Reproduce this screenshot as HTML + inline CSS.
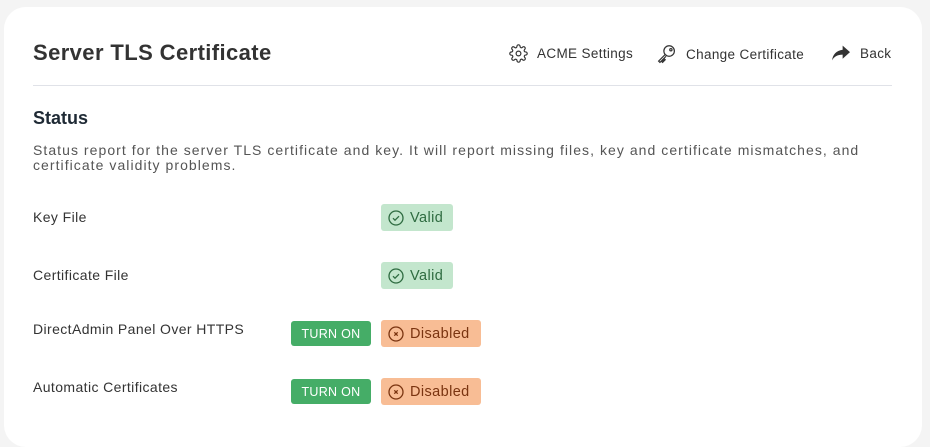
<!DOCTYPE html>
<html><head><style>
body{margin:0;background:#f4f4f4;width:930px;height:430px;overflow:hidden;font-family:"Liberation Sans",sans-serif;color:#333}
.card{position:absolute;left:4px;top:7px;width:918px;height:440px;background:#fff;border-radius:22px}
.abs{position:absolute;white-space:nowrap}
.title{left:29px;top:33px;font-size:22px;font-weight:bold;color:#333;letter-spacing:0.4px}
.nav{top:37px;font-size:13.5px;color:#333;display:flex;align-items:center;gap:9px;letter-spacing:0.35px}
.hr{left:29px;top:78px;width:859px;height:1px;background:#e0e2e8}
.h2{left:29px;top:101px;font-size:18px;font-weight:bold;color:#1f2a35}
.desc{left:29px;top:136px;font-size:14px;line-height:15px;color:#555;letter-spacing:1.05px}
.lbl{left:29px;font-size:14px;color:#333;letter-spacing:0.4px}
.badge{height:27px;border-radius:3px;display:flex;align-items:center;gap:6px;padding:0 7px;font-size:14.5px;letter-spacing:0.4px;box-sizing:border-box}
.ok{background:#c3e6cd;color:#2e6b40}
.no{background:#f8bd95;color:#7a3410}
.btn{left:287px;width:80px;height:25px;background:#45ad67;color:#fff;border-radius:3px;font-size:12.5px;display:flex;align-items:center;justify-content:center;letter-spacing:0.3px}
</style></head><body>
<div class="card">
<div class="abs title">Server TLS Certificate</div>
<div class="abs nav" style="left:505px"><svg width="19" height="19" viewBox="0 0 24 24" fill="none" stroke="#333" stroke-width="1.5"><circle cx="12" cy="12" r="3"/><path d="M19.4 15a1.7 1.7 0 0 0 .3 1.8l.1.1a2 2 0 1 1-2.8 2.8l-.1-.1a1.7 1.7 0 0 0-1.8-.3 1.7 1.7 0 0 0-1 1.5V21a2 2 0 1 1-4 0v-.1a1.7 1.7 0 0 0-1.1-1.5 1.7 1.7 0 0 0-1.800.3l-.1.1a2 2 0 1 1-2.8-2.8l.1-.1a1.7 1.7 0 0 0 .3-1.8 1.7 1.7 0 0 0-1.5-1H3a2 2 0 1 1 0-4h.1a1.7 1.7 0 0 0 1.5-1.1 1.7 1.7 0 0 0-.3-1.8l-.1-.1a2 2 0 1 1 2.8-2.8l.1.1a1.7 1.7 0 0 0 1.8.3H9a1.7 1.7 0 0 0 1-1.5V3a2 2 0 1 1 4 0v.1a1.7 1.7 0 0 0 1 1.5 1.7 1.7 0 0 0 1.8-.3l.1-.1a2 2 0 1 1 2.8 2.8l-.1.1a1.7 1.7 0 0 0-.3 1.8V9a1.7 1.7 0 0 0 1.5 1H21a2 2 0 1 1 0 4h-.1a1.7 1.7 0 0 0-1.5 1z"/></svg>ACME Settings</div>
<div class="abs nav" style="left:652px"><svg width="21" height="21" viewBox="0 0 24 24" fill="none" stroke="#333" stroke-width="1.4"><circle cx="15" cy="8" r="6"/><circle cx="17" cy="6.5" r="1.3"/><path d="M10.5 12 3 19.5 4.5 21l1.5-1.5 1.5 1.5 1-1-1.5-1.5 1-1 1.5 1.5 1-1-1.5-1.5 2.5-2.5"/></svg>Change Certificate</div>
<div class="abs nav" style="left:827px"><svg width="20" height="18" viewBox="0 0 24 22"><path d="M14 2l9 8-9 8v-5C8 13 4 15 1 20c1-7 5-12 13-13z" fill="#333"/></svg>Back</div>
<div class="abs hr"></div>
<div class="abs h2">Status</div>
<div class="abs desc">Status report for the server TLS certificate and key. It will report missing files, key and certificate mismatches, and<br>certificate validity problems.</div>
<div class="abs lbl" style="top:202px">Key File</div>
<div class="abs lbl" style="top:260px">Certificate File</div>
<div class="abs lbl" style="top:314px">DirectAdmin Panel Over HTTPS</div>
<div class="abs lbl" style="top:372px">Automatic Certificates</div>
<div class="abs badge ok" style="left:377px;top:197px;width:72px"><svg width="16" height="16" viewBox="0 0 16 16" fill="none" stroke="#2e6b40" stroke-width="1.3"><circle cx="8" cy="8" r="7"/><path d="M5 8.2l2 2 4-4"/></svg>Valid</div>
<div class="abs badge ok" style="left:377px;top:255px;width:72px"><svg width="16" height="16" viewBox="0 0 16 16" fill="none" stroke="#2e6b40" stroke-width="1.3"><circle cx="8" cy="8" r="7"/><path d="M5 8.2l2 2 4-4"/></svg>Valid</div>
<div class="abs btn" style="top:314px">TURN ON</div>
<div class="abs badge no" style="left:377px;top:313px;width:100px"><svg width="16" height="16" viewBox="0 0 16 16" fill="none" stroke="#7a3410" stroke-width="1.3"><circle cx="8" cy="8" r="7"/><path d="M6.3 6.3l3.4 3.4M9.7 6.3l-3.4 3.4"/></svg>Disabled</div>
<div class="abs btn" style="top:372px">TURN ON</div>
<div class="abs badge no" style="left:377px;top:371px;width:100px"><svg width="16" height="16" viewBox="0 0 16 16" fill="none" stroke="#7a3410" stroke-width="1.3"><circle cx="8" cy="8" r="7"/><path d="M6.3 6.3l3.4 3.4M9.7 6.3l-3.4 3.4"/></svg>Disabled</div>
</div>
</body></html>
